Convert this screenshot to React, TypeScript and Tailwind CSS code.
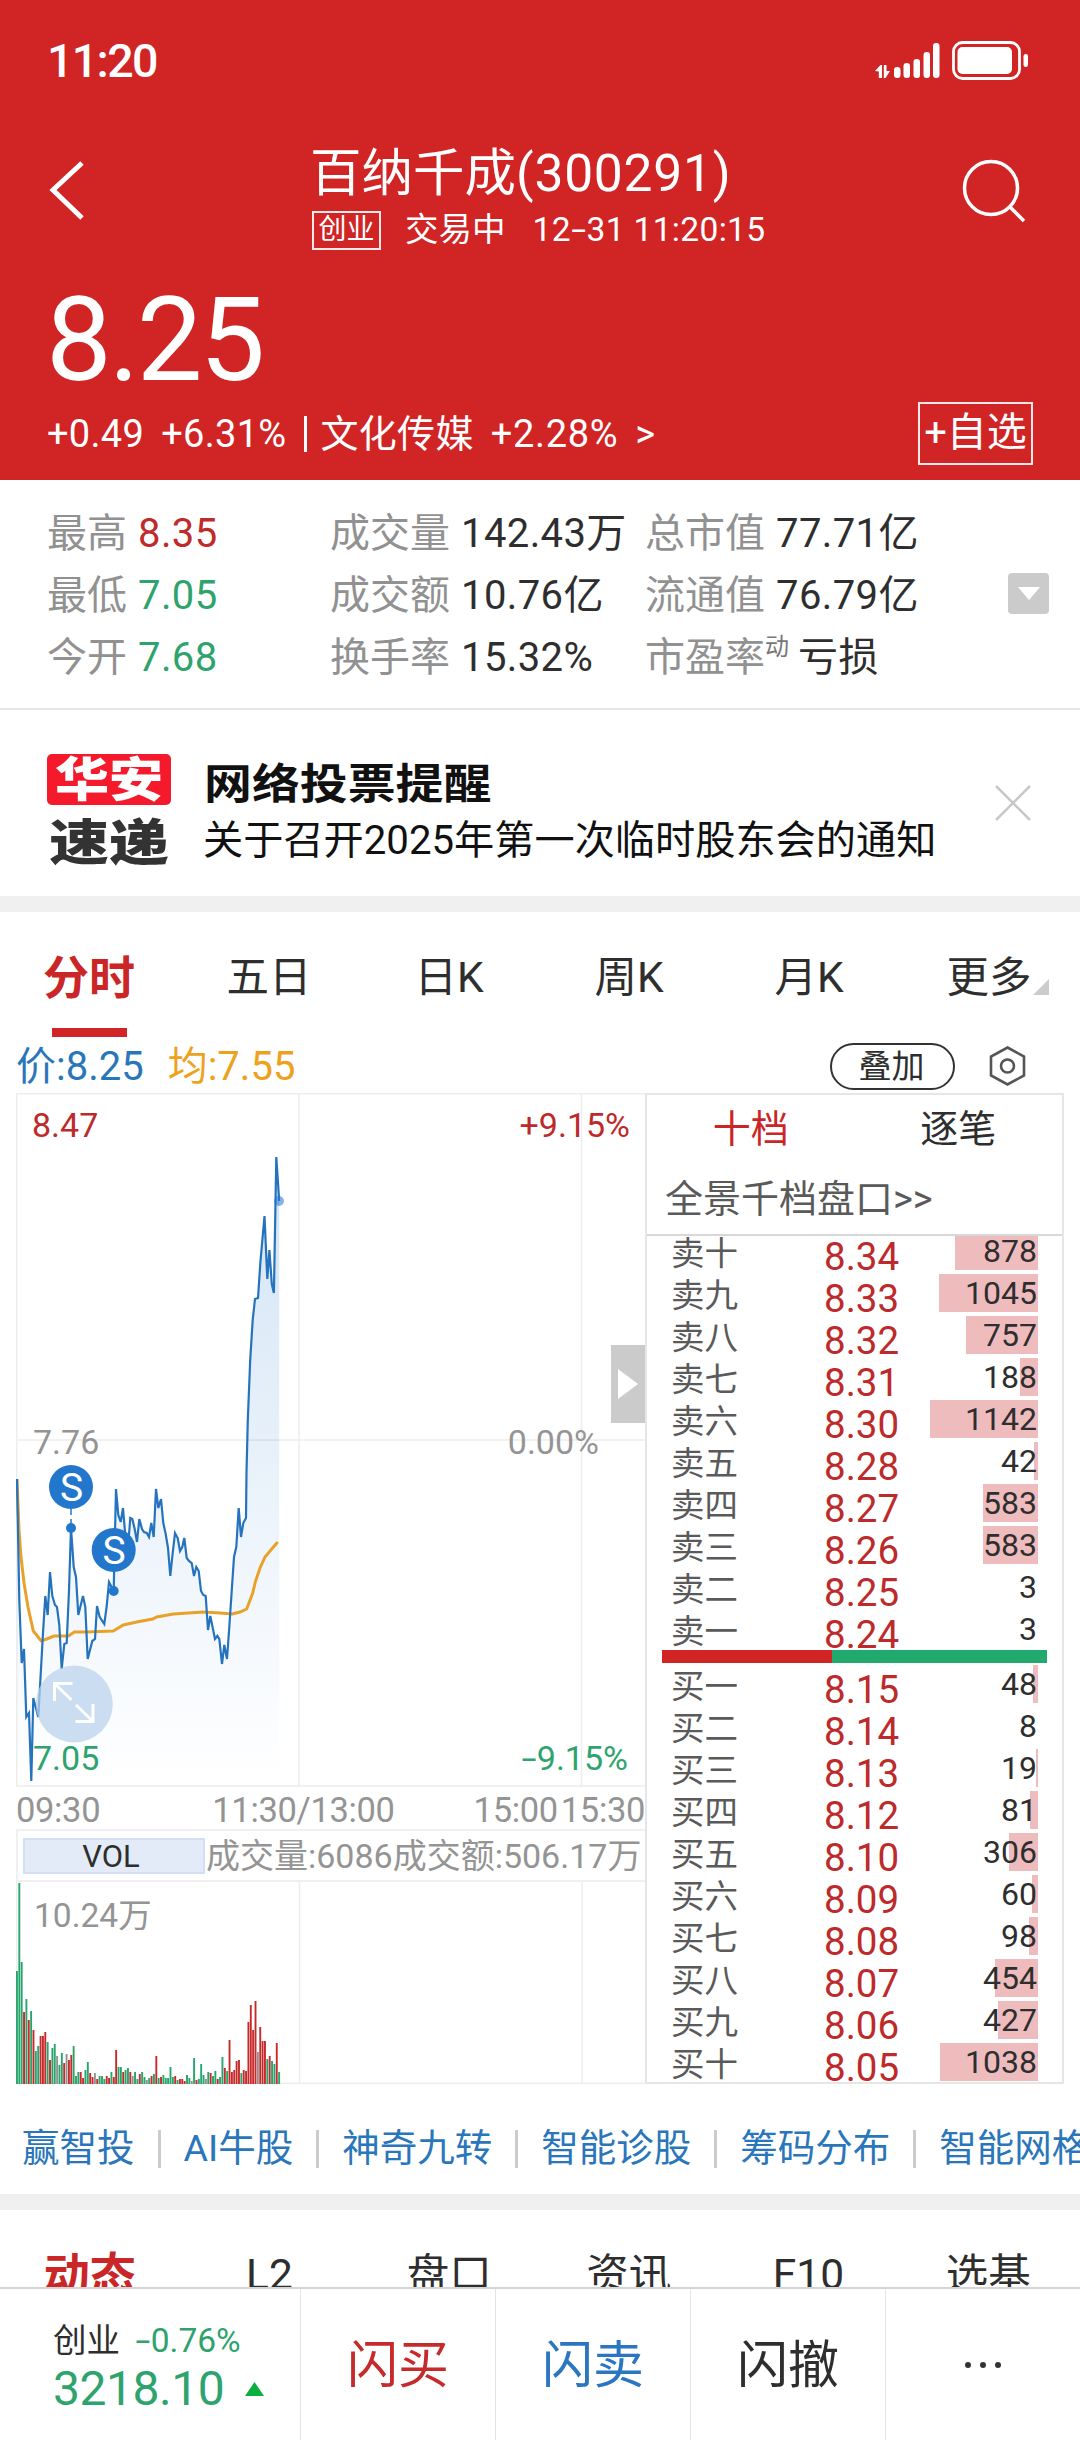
import clsx from "clsx"

const stats = [
  [
    { label: "最高", value: "8.35", color: "text-[#c02a2b]" },
    { label: "最低", value: "7.05", color: "text-[#2ea36d]" },
    { label: "今开", value: "7.68", color: "text-[#2ea36d]" },
  ],
  [
    { label: "成交量", value: "142.43万" },
    { label: "成交额", value: "10.76亿" },
    { label: "换手率", value: "15.32%" },
  ],
  [
    { label: "总市值", value: "77.71亿" },
    { label: "流通值", value: "76.79亿" },
    { label: "市盈率", sup: "动", value: "亏损" },
  ],
]

const chartTabs = ["分时", "五日", "日K", "周K", "月K", "更多"]
const infoTabs = ["动态", "L2", "盘口", "资讯", "F10", "选基"]
const links = ["赢智投", "AI牛股", "神奇九转", "智能诊股", "筹码分布", "智能网格"]

const sells = [
  { label: "卖十", price: "8.34", vol: 878 },
  { label: "卖九", price: "8.33", vol: 1045 },
  { label: "卖八", price: "8.32", vol: 757 },
  { label: "卖七", price: "8.31", vol: 188 },
  { label: "卖六", price: "8.30", vol: 1142 },
  { label: "卖五", price: "8.28", vol: 42 },
  { label: "卖四", price: "8.27", vol: 583 },
  { label: "卖三", price: "8.26", vol: 583 },
  { label: "卖二", price: "8.25", vol: 3 },
  { label: "卖一", price: "8.24", vol: 3 },
]

const buys = [
  { label: "买一", price: "8.15", vol: 48 },
  { label: "买二", price: "8.14", vol: 8 },
  { label: "买三", price: "8.13", vol: 19 },
  { label: "买四", price: "8.12", vol: 81 },
  { label: "买五", price: "8.10", vol: 306 },
  { label: "买六", price: "8.09", vol: 60 },
  { label: "买七", price: "8.08", vol: 98 },
  { label: "买八", price: "8.07", vol: 454 },
  { label: "买九", price: "8.06", vol: 427 },
  { label: "买十", price: "8.05", vol: 1038 },
]

const MAX_VOL = 1142

const priceLine =
  "1,386 3.3,507 5.7,570 8,556 10.3,624 13,620 15.3,688 17.3,605 22.3,624 27,540 29.3,503 31.7,522 34,479 36.3,503 39,512 41,514 43.3,532 45.7,576 48.3,551 50.7,550 53,497 55,435 57.7,474 60,484 62.3,522 67,503 69.3,514 71.7,566 76.3,548 79,546 81,513 83.7,524 88.3,531 90.7,513 93,489 97.7,498 100,396 102.3,422 104.7,429 107,415 109.7,447 112,454 114.3,425 116.3,426 118.7,436 121,449 123.3,426 126,436 128,439 130.7,440 133,444 135.3,430 137.7,444 140,396 142.3,415 145,406 147.3,430 149.7,441 152,455 154.3,483 156.7,460 159,440 161.7,445 164,458 166.3,454 168.3,445 170.7,465 173,468 175.7,470 178,483 180.3,474 182.7,478 185,498 187.3,502 189.7,503 192,537 194.3,523 199,546 201.3,543 203.3,546 206,571 208.3,552 211,566 213.3,534 218,464 220.3,454 222.7,415 225,444 227.3,430 230,425 230.5,380 231.8,327 234.2,267 236.7,227 239,206 242,205 244.4,169 248.5,123 251.3,186 253.4,157 255.8,191 257.9,200 260.3,64 263.2,108"

const avgLine =
  "1,386 3,437 5,464 8,490 12,514 17.3,538 25.3,548 30.7,546 38,543 52.3,543 58.3,539 70.7,539 97.3,538 107.3,532 120.7,529 136.7,526 140.7,524 157.3,521 187.3,519 204,520 216.3,521 224,519 230.7,516 236.7,500 239.3,489 244,475 249,464 255.7,456 261.7,449"

// one entry per minute: direction (g = down, r = up, n = flat) and bar height
const volumes =
  "g113 g201 g122 r72 g85 r64 g73 r54 g33 g38 r48 r48 r52 g42 r24 g36 g40 n28 g19 g31 r21 n30 r24 r29 g38 g8 g12 r12 r6 g14 g22 r11 r7 n11 r5 g8 g8 g5 r8 r6 g12 r7 r34 g17 g17 r12 g14 g16 r12 n8 g12 g5 r10 g12 g7 n4 g6 r8 g10 r28 g6 r7 g9 g6 g6 g17 g7 r8 g4 r5 r5 r3 g9 g6 n3 g26 r4 g5 g20 g9 n5 g12 r11 g8 g13 r5 g7 g27 r16 g13 r44 r12 r14 r23 r24 g11 r14 r13 r62 r79 r54 r83 n32 r57 r43 r43 g25 r28 g23 g20 r41 g12".split(" ")

const volumeFill: Record<string, string> = { g: "#27a56c", r: "#c62a2b", n: "#929292" }

function Dash() {
  return <span className="inline-block w-[0.47em] scale-x-[1.6] text-center">-</span>
}

function StatusIcons() {
  return (
    <svg width="156" height="42" viewBox="0 0 156 42" className="text-white">
      <g fill="currentColor">
        <path d="M0 31 L5.500 25 H7 V38 H3.800 V31.500 Z" />
        <path d="M15 31 L10.500 38 H8.800 V25 H11.500 V31 Z" />
        <rect x="19" y="27" width="6.500" height="11" rx="3" />
        <rect x="28.500" y="23" width="6.500" height="15" rx="3" />
        <rect x="38.500" y="19" width="6.500" height="19" rx="3" />
        <rect x="48.500" y="12" width="6.500" height="26" rx="3" />
        <rect x="58" y="3" width="6.500" height="35" rx="3" />
        <rect x="82.500" y="7" width="54.500" height="27" rx="5" />
        <rect x="148.500" y="14" width="4.500" height="13" rx="2.200" />
      </g>
      <rect x="78.500" y="2.500" width="66" height="36" rx="9" fill="none" stroke="currentColor" strokeWidth="2.800" />
    </svg>
  )
}

function Header() {
  return (
    <header className="flex h-[480px] flex-col bg-[#d12425] text-white">
      <div className="flex h-[122px] items-center justify-between pl-[47px] pr-[49px]">
        <span className="text-[46.5px] font-medium leading-none tracking-[-0.035em]">11:20</span>
        <StatusIcons />
      </div>
      <div className="flex h-[150px] items-center justify-between pl-[48px] pr-[52px]">
        <svg width="40" height="60" viewBox="0 0 40 60" fill="none" stroke="currentColor" strokeWidth="5" className="-mt-3">
          <path d="M34 2 L5 29 L34 57" />
        </svg>
        <div className="ml-[30px] mt-[3px] flex w-[460px] flex-col">
          <h1 className="whitespace-nowrap text-[51.5px] leading-[64px]">
            百纳千成<span className="tracking-[0.015em]">(300291)</span>
          </h1>
          <div className="-mt-px ml-[2px] flex h-[50px] items-center whitespace-nowrap text-[33.5px] leading-none">
            <span className="flex h-[39px] w-[69px] items-center justify-center border-2 border-white/90 text-[28px]">创业</span>
            <span className="ml-[24px]">交易中</span>
            <span className="ml-[27px] tracking-[0.01em]">
              12
              <Dash />
              31 11:20:15
            </span>
          </div>
        </div>
        <svg width="66" height="66" viewBox="0 0 66 66" fill="none" stroke="currentColor" strokeWidth="3.5" className="-mt-3">
          <circle cx="29" cy="30" r="26.5" />
          <path d="M47 48 L62 63" />
        </svg>
      </div>
      <div className="h-[124px] pl-[46px] text-[117px] leading-[136px] tracking-[-0.025em]">8.25</div>
      <div className="flex h-[74px] items-center justify-between pl-[47px] pr-[47px]">
        <div className="flex items-center whitespace-nowrap pt-[2px] text-[38px] leading-none tracking-[0.008em]">
          <span>+0.49</span>
          <span className="ml-[17px]">+6.31%</span>
          <span className="ml-[18px] h-[36px] w-[3px] bg-white" />
          <span className="ml-[13px]">文化传媒</span>
          <span className="ml-[17px] tracking-[0.018em]">+2.28%</span>
          <span className="ml-[17px]">&gt;</span>
        </div>
        <button className="flex h-[63px] w-[115px] items-center justify-center whitespace-nowrap border-2 border-white/90 text-[40px] leading-none">
          +自选
        </button>
      </div>
    </header>
  )
}

function Stats() {
  return (
    <section className="relative flex h-[230px] border-b-2 border-[#e5e5e5] pl-[47px] pt-[23px] text-[40px] text-[#2e2e2e]">
      {stats.map((column, index) => (
        <div key={index} className={clsx("whitespace-nowrap", index === 0 ? "w-[283px]" : "w-[315px]")}>
          {column.map((item) => (
            <div key={item.label} className="flex h-[62px] items-center leading-none">
              <span className="text-[#919191]">{item.label}</span>
              {item.sup && <span className="-mt-[22px] text-[24px] text-[#777]">{item.sup}</span>}
              <span className={clsx("tracking-[0.01em]", item.sup ? "ml-[9px]" : "ml-[11px]", item.color)}>{item.value}</span>
            </div>
          ))}
        </div>
      ))}
      <button className="absolute right-[31px] top-[93px] flex h-[41px] w-[41px] items-center justify-center rounded-[4px] bg-[#cbcbcb]">
        <svg width="22" height="13" viewBox="0 0 22 13">
          <path d="M0 0 H22 L11 13 Z" fill="#fff" />
        </svg>
      </button>
    </section>
  )
}

function Notice() {
  return (
    <section className="flex h-[186px] items-center pl-[47px] pr-[49px]">
      <div className="mt-[15px] flex w-[124px] flex-col items-center gap-[14px]">
        <div className="flex h-[51px] w-[124px] items-center justify-center rounded-[5px] bg-[#f51a2b]">
          <span className="scale-x-[1.15] whitespace-nowrap text-[47px] font-black leading-none text-white">华安</span>
        </div>
        <span className="flex h-[48px] scale-x-[1.22] items-center whitespace-nowrap text-[49px] font-black leading-none text-[#333]">
          速递
        </span>
      </div>
      <div className="ml-[33px] mt-[19px] flex-1 whitespace-nowrap text-[#111]">
        <h2 className="w-fit origin-left scale-x-[1.14] text-[42px] font-bold leading-[56px]">网络投票提醒</h2>
        <p className="-ml-px text-[40.2px] leading-[56px]">关于召开2025年第一次临时股东会的通知</p>
      </div>
      <svg width="36" height="36" viewBox="0 0 36 36" stroke="#c8c8c8" strokeWidth="2.5">
        <path d="M1 1 L35 35 M35 1 L1 35" />
      </svg>
    </section>
  )
}

function ChartTabs() {
  return (
    <nav className="grid h-[125px] grid-cols-6">
      {chartTabs.map((tab, index) => (
        <div
          key={tab}
          className={clsx(
            "relative flex flex-col items-center pr-[2px] pt-[34px] leading-[64px]",
            index === 0 ? "text-[46px] font-bold text-[#cb2627]" : "text-[42.5px] text-[#2e2e2e]",
          )}
        >
          {tab}
          {index === 0 && <span className="mt-[18px] h-[9px] w-[75px] bg-[#d12425]" />}
          {tab === "更多" && (
            <svg width="16" height="16" viewBox="0 0 16 16" className="absolute right-[31px] top-[67px]">
              <path d="M16 0 V16 H0 Z" fill="#ccc" />
            </svg>
          )}
        </div>
      ))}
    </nav>
  )
}

function Legend() {
  return (
    <div className="flex h-[56px] items-center pl-[16px] pr-[54px] pt-[2px] text-[40px] leading-none">
      <span className="pt-[2px] text-[#2a76ba]">价:8.25</span>
      <span className="ml-[24px] pt-[2px] text-[#eda11c]">均:7.55</span>
      <button className="ml-auto flex h-[47px] w-[125px] items-center justify-center rounded-full border-2 border-[#333] pr-[2px] text-[33px] text-[#2e2e2e]">
        叠加
      </button>
      <svg width="37" height="40" viewBox="0 0 37 40" fill="none" stroke="#555" strokeWidth="2.6" className="ml-[34px]">
        <path d="M18.500 1.500 L35 10.500 V29.500 L18.500 38.500 L2 29.500 V10.500 Z" />
        <circle cx="18.500" cy="20" r="6.500" />
      </svg>
    </div>
  )
}

function PriceChart() {
  return (
    <div className="relative h-[694px] text-[34px] leading-none">
      <svg width="629" height="694" viewBox="0 0 629 694" fill="none" className="block">
        <defs>
          <linearGradient id="area" x1="0" y1="60" x2="0" y2="690" gradientUnits="userSpaceOnUse">
            <stop offset="0" stopColor="#2277cd" stopOpacity="0.2" />
            <stop offset="1" stopColor="#2277cd" stopOpacity="0" />
          </linearGradient>
        </defs>
        <path d="M0 .75 H629 M0 347 H629 M0 693 H629 M.75 0 V694 M283 0 V694 M565.500 0 V694" stroke="#ededed" strokeWidth="1.5" />
        <polygon points={`1,694 ${priceLine} 263.2,694`} fill="url(#area)" />
        <polyline points={avgLine} stroke="#e8a22b" strokeWidth="3" />
        <polyline points={priceLine} stroke="#2673bd" strokeWidth="2.2" />
        <circle cx="263" cy="108" r="5" fill="#2277cd" opacity="0.55" />
        <path d="M55 416 V435" stroke="#2277cd" strokeWidth="1.5" strokeDasharray="6 4" />
        <path d="M97.700 478 V498" stroke="#2277cd" strokeWidth="1.5" />
        <g fill="#2277cd">
          <circle cx="55" cy="435" r="5" />
          <circle cx="97.700" cy="498" r="5" />
          <circle cx="55" cy="394" r="22" />
          <circle cx="97.700" cy="457" r="22" />
        </g>
        <circle cx="58.300" cy="611" r="38.500" fill="#b9d1ec" fillOpacity="0.72" />
        <path
          d="M38.500 608 V590.500 H56.500 M38.500 590.500 L55.500 607 M60 612 L77 628.500 M77 611 V628.500 H59.500"
          stroke="#fff"
          strokeWidth="3"
        />
      </svg>
      <span className="absolute left-[55.500px] top-[395px] -translate-x-1/2 -translate-y-1/2 text-[39px] text-white">S</span>
      <span className="absolute left-[98px] top-[458px] -translate-x-1/2 -translate-y-1/2 text-[39px] text-white">S</span>
      <span className="absolute left-[16px] top-[15px] text-[#bd2a2b]">8.47</span>
      <span className="absolute right-[15px] top-[15px] text-[#bd2a2b]">+9.15%</span>
      <span className="absolute left-[17px] top-[332px] text-[#949494]">7.76</span>
      <span className="absolute right-[46px] top-[332px] text-[#949494]">0.00%</span>
      <span className="absolute left-[17px] top-[648px] text-[#2ea36d]">7.05</span>
      <span className="absolute right-[17px] top-[648px] text-[#2ea36d]">
        <Dash />
        9.15%
      </span>
      <button className="absolute right-0 top-[252px] flex h-[78px] w-[34px] items-center justify-center bg-[#cbcbcb]">
        <svg width="20" height="30" viewBox="0 0 20 30">
          <path d="M0 0 L20 15 L0 30 Z" fill="#fff" />
        </svg>
      </button>
    </div>
  )
}

function VolumeChart() {
  return (
    <div className="relative h-[202px]">
      <svg width="629" height="202" viewBox="0 0 629 202" className="block">
        <path d="M0 201.250 H629 M.75 0 V202 M283.500 0 V202 M566 0 V202" stroke="#ededed" strokeWidth="1.5" />
        {volumes.map((item, index) => {
          const height = Number(item.slice(1))
          return (
            <rect key={index} x={index * 2.362} y={202 - height} width="1.9" height={height} fill={volumeFill[item[0]]} />
          )
        })}
      </svg>
      <span className="absolute left-[18px] top-[17px] text-[33.5px] leading-none text-[#949494]">10.24万</span>
    </div>
  )
}

function OrderRow({ label, price, vol }: { label: string; price: string; vol: number }) {
  const width = (vol / MAX_VOL) * 108
  return (
    <div className="flex h-[42px] leading-[38px]">
      <span className="w-[153px] pt-[3px] text-[33.5px] text-[#5a5a5a]">{label}</span>
      <span className="pt-[6px] text-[38.5px] text-[#bd2a2b]">{price}</span>
      <span className="relative ml-auto h-[38px] w-[108px] text-right text-[32px] text-[#2e2e2e]">
        <i className="absolute inset-y-0 right-0 bg-[#efbcbe]" style={{ width: width < 1 ? 0 : Math.round(width) }} />
        <b className="relative pr-px font-normal">{vol}</b>
      </span>
    </div>
  )
}

function OrderBook() {
  return (
    <aside className="flex h-[991px] w-[419px] flex-col border-2 border-[#e6e6e6]">
      <div className="grid h-[68px] grid-cols-2 items-center text-center text-[38px] leading-none">
        <span className="text-[#cb2627]">十档</span>
        <span className="text-[#2e2e2e]">逐笔</span>
      </div>
      <div className="flex h-[73px] items-center whitespace-nowrap border-b-2 border-[#d8d8d8] pl-[18px] text-[38px] leading-none text-[#5a5a5a]">
        全景千档盘口&gt;&gt;
      </div>
      <div className="h-[414px] overflow-hidden pl-[24px] pr-[24px]">
        <div className="-mt-[4px]">
          {sells.map((row) => (
            <OrderRow key={row.label} {...row} />
          ))}
        </div>
      </div>
      <div className="ml-[15px] flex h-[13px] w-[385px] shrink-0">
        <span className="w-[170px] bg-[#d12425]" />
        <span className="flex-1 bg-[#22aa6e]" />
      </div>
      <div className="h-[419px] overflow-hidden pl-[24px] pr-[24px] pt-[2px]">
        {buys.map((row) => (
          <OrderRow key={row.label} {...row} />
        ))}
      </div>
    </aside>
  )
}

function BottomBar() {
  return (
    <footer className="flex h-[153px] border-t-2 border-[#d4d4d4] bg-white text-[51px] leading-none">
      <div className="flex w-[300px] flex-col pl-[53px] pt-[32px]">
        <div className="flex h-[40px] items-center whitespace-nowrap text-[33.5px] text-[#2e2e2e]">
          创业
          <span className="ml-[15px] text-[#2ea36d]">
            <Dash />
            0.76%
          </span>
        </div>
        <div className="mt-[4px] flex h-[48px] items-center text-[48px] tracking-[-0.01em] text-[#2ea36d]">
          3218.10
          <svg width="19" height="14" viewBox="0 0 19 14" className="ml-[21px]">
            <path d="M9.500 0 L19 14 H0 Z" fill="#0ab03f" />
          </svg>
        </div>
      </div>
      <button className="w-[195px] border-l border-[#e4e4e4] pt-[2px] text-[#c62a2b]">闪买</button>
      <button className="w-[195px] border-l border-[#e4e4e4] pt-[2px] text-[#2a76c0]">闪卖</button>
      <button className="w-[195px] border-l border-[#e4e4e4] pt-[2px] text-[#2e2e2e]">闪撤</button>
      <button className="flex flex-1 items-center justify-center gap-[9px] border-l border-[#e4e4e4]">
        <i className="size-[6px] rounded-full bg-[#333]" />
        <i className="size-[6px] rounded-full bg-[#333]" />
        <i className="size-[6px] rounded-full bg-[#333]" />
      </button>
    </footer>
  )
}

export default function App() {
  return (
    <div className="flex h-[2440px] w-[1080px] flex-col overflow-hidden bg-white font-['Roboto','Noto_Sans_CJK_SC',sans-serif]">
      <Header />
      <Stats />
      <Notice />
      <div className="h-[16px] bg-[#f0f0f0]" />
      <ChartTabs />
      <Legend />

      <main className="flex h-[991px] pl-[16px]">
        <div className="w-[629px]">
          <PriceChart />
          <div className="flex h-[44px] items-center border-b-2 border-[#f0f0f0] pt-[4px] text-[34.5px] leading-none tracking-[-0.01em] text-[#949494]">
            <span>09:30</span>
            <span className="ml-auto">11:30/13:00</span>
            <span className="ml-[79px]">15:00</span>
            <span className="ml-[3px]">15:30</span>
          </div>
          <div className="flex h-[51px] items-center whitespace-nowrap border-b-2 border-l-2 border-[#f0f0f0] pl-[5px] text-[34px] leading-none text-[#949494]">
            <span className="flex h-[36px] w-[182px] items-center justify-center border-2 border-[#d2e0f2] bg-[#e2ebf7] pr-[6px] pt-[2px] text-[31px] text-[#2e2e2e]">
              VOL
            </span>
            <span className="ml-[1px]">成交量:6086</span>
            <span>成交额:506.17万</span>
          </div>
          <VolumeChart />
        </div>
        <OrderBook />
      </main>

      <div className="flex h-[110px] items-center gap-[23px] whitespace-nowrap pl-[22px] pt-[19px] text-[37.5px] leading-none text-[#2a76ba]">
        {links.map((link, index) => (
          <div key={link} className="flex shrink-0 items-center gap-[23px]">
            {index > 0 && <span className="h-[38px] w-[3px] bg-[#ccc]" />}
            {link}
          </div>
        ))}
      </div>
      <div className="h-[16px] bg-[#f0f0f0]" />
      <nav className="grid h-[77px] grid-cols-6 overflow-hidden pr-[2px] pt-[33px] text-center leading-[64px]">
        {infoTabs.map((tab, index) => (
          <span key={tab} className={index === 0 ? "text-[46px] font-bold text-[#cb2627]" : "text-[42.5px] text-[#2e2e2e]"}>
            {tab}
          </span>
        ))}
      </nav>
      <BottomBar />
    </div>
  )
}
